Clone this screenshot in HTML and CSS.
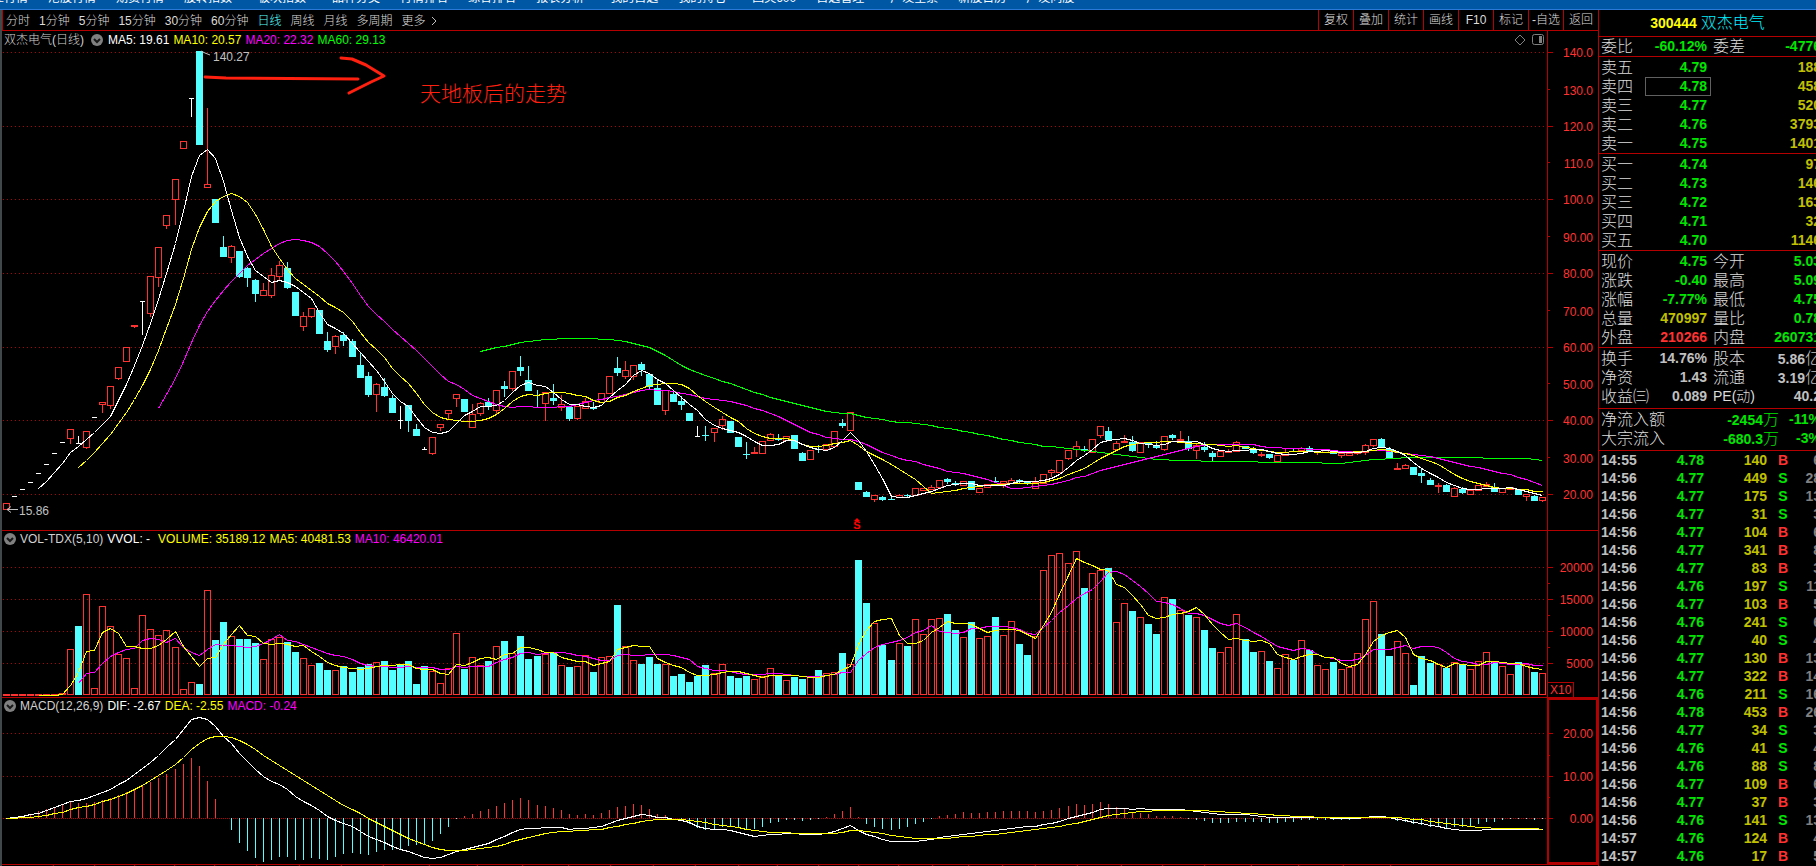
FILE: index.html
```html
<!DOCTYPE html>
<html lang="zh-CN">
<head>
<meta charset="utf-8">
<title>双杰电气 日线</title>
<link rel="stylesheet" href="styles.css">
</head>
<body>
<div class="app">
  <nav class="menu">
    <a href="#">行业行情</a><a href="#">港股行情</a><a href="#">期货行情</a><a href="#">股转指数</a>
    <a href="#" class="group">板块指数</a>
    <a href="#" class="group">品种分类</a><a href="#">行情排名</a><a href="#">综合排名</a><a href="#">报表分析</a>
    <a href="#" class="group">我的自选</a><a href="#">我的持仓</a>
    <a href="#" class="group">国英600</a><a href="#">自选管理</a>
    <a href="#" class="group">广发全景</a><a href="#">新股日历</a><a href="#">广发问股</a>
  </nav>
  <div class="body">
    <main class="chart">
      <div class="toolbar">
        <div class="periods">
          <button>分时</button><button>1分钟</button><button>5分钟</button><button>15分钟</button><button>30分钟</button><button>60分钟</button><button class="on">日线</button><button>周线</button><button>月线</button><button>多周期</button><button class="more">更多<svg width="6" height="10"><path d="M1 1l4 4-4 4"/></svg></button>
        </div>
        <div class="tools">
          <button>复权</button><button>叠加</button><button>统计</button><button>画线</button><button>F10</button><button>标记</button><button>-自选</button><button>返回</button>
        </div>
      </div>

      <section class="pane price">
        <svg class="plot" id="price"></svg>
        <header class="legend">
          <span class="dim">双杰电气(日线)</span>
          <svg class="drop" width="12" height="12"><circle cx="6" cy="6" r="6"/><path d="M3 5l3 3 3-3"/></svg>
          <span class="white">MA5: 19.61</span><span class="yellow">MA10: 20.57</span><span class="pink">MA20: 22.32</span><span class="green">MA60: 29.13</span>
          <svg class="corner" width="30" height="12"><path d="M6 1l5 5-5 5-5-5z"/><rect x="18.500" y="0.500" width="11" height="10" rx="2"/><rect class="solid" x="25" y="2" width="3" height="7"/></svg>
        </header>
      </section>

      <section class="pane volume">
        <svg class="plot" id="volume"></svg>
        <header class="legend">
          <svg class="drop" width="12" height="12"><circle cx="6" cy="6" r="6"/><path d="M3 5l3 3 3-3"/></svg>
          <span class="dim">VOL-TDX(5,10)</span><span class="white wide">VVOL: -</span><span class="yellow">VOLUME: 35189.12</span><span class="yellow">MA5: 40481.53</span><span class="pink">MA10: 46420.01</span>
        </header>
      </section>

      <section class="pane macd">
        <svg class="plot" id="macd"></svg>
        <header class="legend">
          <svg class="drop" width="12" height="12"><circle cx="6" cy="6" r="6"/><path d="M3 5l3 3 3-3"/></svg>
          <span class="dim">MACD(12,26,9)</span><span class="white">DIF: -2.67</span><span class="yellow">DEA: -2.55</span><span class="pink">MACD: -0.24</span>
        </header>
      </section>
      <svg class="dates" id="dates"></svg>
    </main>

    <aside class="panel">
      <h1 class="stock"><span>300444</span> <b>双杰电气</b></h1>
      <div class="block first">
        <table class="quote"><colgroup><col class="c1"><col class="c2"><col class="c3"><col></colgroup>
          <tr><th>委比</th><td class="g">-60.12%</td><th>委差</th><td class="g">-4776</td></tr>
        </table>
      </div>
      <div class="block">
        <table class="quote"><colgroup><col class="c1"><col class="c2"><col class="c3"><col></colgroup>
          <tr><th>卖五</th><td class="g">4.79</td><th></th><td class="y">188</td></tr>
          <tr><th>卖四</th><td class="g boxed">4.78</td><th></th><td class="y">458</td></tr>
          <tr><th>卖三</th><td class="g">4.77</td><th></th><td class="y">520</td></tr>
          <tr><th>卖二</th><td class="g">4.76</td><th></th><td class="y">3793</td></tr>
          <tr><th>卖一</th><td class="g">4.75</td><th></th><td class="y">1401</td></tr>
        </table>
      </div>
      <div class="block">
        <table class="quote"><colgroup><col class="c1"><col class="c2"><col class="c3"><col></colgroup>
          <tr><th>买一</th><td class="g">4.74</td><th></th><td class="y">97</td></tr>
          <tr><th>买二</th><td class="g">4.73</td><th></th><td class="y">146</td></tr>
          <tr><th>买三</th><td class="g">4.72</td><th></th><td class="y">163</td></tr>
          <tr><th>买四</th><td class="g">4.71</td><th></th><td class="y">32</td></tr>
          <tr><th>买五</th><td class="g">4.70</td><th></th><td class="y">1146</td></tr>
        </table>
      </div>
      <div class="block">
        <table class="quote"><colgroup><col class="c1"><col class="c2"><col class="c3"><col></colgroup>
          <tr><th>现价</th><td class="g">4.75</td><th>今开</th><td class="g">5.03</td></tr>
          <tr><th>涨跌</th><td class="g">-0.40</td><th>最高</th><td class="g">5.09</td></tr>
          <tr><th>涨幅</th><td class="g">-7.77%</td><th>最低</th><td class="g">4.75</td></tr>
          <tr><th>总量</th><td class="y">470997</td><th>量比</th><td class="g">0.78</td></tr>
          <tr><th>外盘</th><td class="r">210266</td><th>内盘</th><td class="g">260731</td></tr>
        </table>
      </div>
      <div class="block loose">
        <table class="quote"><colgroup><col class="c1"><col class="c2"><col class="c3"><col></colgroup>
          <tr><th>换手</th><td>14.76%</td><th>股本</th><td>5.86<i>亿</i></td></tr>
          <tr><th>净资</th><td>1.43</td><th>流通</th><td>3.19<i>亿</i></td></tr>
          <tr><th>收益㈢</th><td>0.089</td><th class="pe"><b>PE</b>(动)</th><td>40.2</td></tr>
        </table>
      </div>
      <div class="block loose">
        <table class="quote"><colgroup><col class="f1"><col class="f2"><col></colgroup>
          <tr><th>净流入额</th><td class="g">-2454<i>万</i></td><td class="g">-11%</td></tr>
          <tr><th>大宗流入</th><td class="g">-680.3<i>万</i></td><td class="g">-3%</td></tr>
        </table>
      </div>
      <table class="ticks"><colgroup><col class="t1"><col class="t2"><col class="t3"><col class="t4"><col></colgroup><tbody id="ticks"></tbody></table>
    </aside>
  </div>
</div>
<script src="chart.js"></script>
</body>
</html>
```

FILE: styles.css
```css
* { box-sizing: border-box; }
body {
  margin: 0;
  background: #000;
  color: #c0c0c0;
  font: 12px/18px "Liberation Sans", "Noto Sans CJK SC", sans-serif;
}
button { margin: 0; padding: 0; border: 0; background: none; color: inherit; font: inherit; }
.app { display: flex; flex-direction: column; height: 100vh; overflow: hidden; }

.menu {
  display: flex;
  flex: none;
  align-items: flex-end;
  gap: 20px;
  height: 10px;
  padding-bottom: 3px;
  overflow: hidden;
  background: #0058a4;
  border-bottom: 1px solid #2a78d8;
}
.menu a { color: #fff; text-decoration: none; white-space: nowrap; line-height: 16px; }
.menu a:first-child { margin-left: -20px; }
.menu .group { margin-left: 6px; }

.body { display: flex; flex: 1; min-height: 0; }
.chart {
  display: grid;
  flex: 1;
  grid-template: 21px minmax(0, 500fr) minmax(0, 167fr) minmax(0, 167fr) 1px / minmax(0, 1fr);
  min-width: 0;
  border-left: 2px solid #40484a;
  background: #000;
}
.toolbar {
  display: flex;
  justify-content: space-between;
  border-left: 1px solid #b40000;
  border-bottom: 1px solid #b40000;
  color: #dcdcdc;
}
.periods { display: flex; gap: 9px; padding: 1px 0 0 3px; white-space: nowrap; align-items: center; font-weight: 300; }
.periods .on { color: #54ffff; }
.more { display: flex; align-items: center; gap: 5px; }
.more svg { fill: none; stroke: #c0c0c0; }
.tools { display: flex; font-weight: 300; }
.tools button { width: 35px; border-left: 1px solid #b40000; white-space: nowrap; }

.pane {
  display: grid;
  grid-template: minmax(0, 1fr) / minmax(0, 1fr);
  border-bottom: 1px solid #b40000;
}
.plot { grid-area: 1 / 1; width: 100%; height: 100%; }
.legend {
  grid-area: 1 / 1;
  display: flex;
  align-items: center;
  align-self: start;
  gap: 4px;
  height: 18px;
  padding: 0 54px 0 2px;
  white-space: nowrap;
}
.volume .legend, .macd .legend { height: 16px; }
.drop { flex: none; }
.drop circle { fill: #808080; }
.drop path { fill: none; stroke: #181818; stroke-width: 2; }
.price .drop { margin: 0 1px 0 3px; }
.corner { margin-left: auto; fill: none; stroke: #808080; }
.corner .solid { fill: #808080; stroke: none; }
.dim { color: #d0d0d0; font-weight: 300; }
.white { color: #fff; }
.wide { margin-right: 4px; }
.yellow { color: #ff0; }
.pink { color: #f0f; }
.green { color: #0f0; }
.dates { width: 100%; height: 1px; }

.plot text { fill: #ff3232; }
.plot .note { fill: #c0c0c0; }
.plot .remark { fill: #ff2010; font-size: 21px; font-weight: 300; }
.plot .mark { fill: #f00; font-size: 11px; font-weight: bold; }
.crisp { shape-rendering: crispEdges; fill: none; }
.grid, .axis { stroke: #b40000; }
.grid { stroke-dasharray: 1 3; }
.zero { stroke: #b40000; stroke-dasharray: 1 1; }
.up { stroke: #ff3232; }
.down { stroke: #54ffff; }
.fill { fill: #54ffff; }
.flat { stroke: #fff; }
.l-white { stroke: #fff; }
.l-yellow { stroke: #ff0; }
.l-pink { stroke: #f0f; }
.l-green { stroke: #0f0; }
.frame { stroke: #b40000; stroke-width: 2; }
.pen { fill: none; stroke: #ff2010; stroke-width: 3; stroke-linecap: round; stroke-linejoin: round; }
.lead { fill: none; stroke: #c0c0c0; }

.panel { flex: 0 0 218px; overflow: hidden; border-left: 1px solid #b40000; }
.stock {
  display: flex;
  align-items: center;
  justify-content: center;
  gap: 4px;
  height: 27px;
  margin: 0;
  border-bottom: 1px solid #b40000;
  color: #ff0;
  font-size: 14px;
}
.stock b { color: #00f0ff; font-size: 16px; font-weight: 300; }
.block { padding: 1px 0 0 2px; border-bottom: 1px solid #b40000; }
.block.first { padding-top: 0; }
.block.loose { padding-bottom: 2px; }
table { border-collapse: collapse; table-layout: fixed; width: 220px; white-space: nowrap; }
th, td { padding: 0; height: 19px; line-height: 17px; }
th { color: #dcdcdc; font-size: 16px; font-weight: 300; text-align: left; }
td { font-size: 14px; font-weight: bold; text-align: right; }
.quote td:nth-child(2) { padding-right: 4px; }
.quote th:nth-child(3) { padding-left: 2px; }
td i { font-size: 16px; font-style: normal; font-weight: 300; }
.quote .pe { font-size: 14px; }
.quote .boxed { outline: 1px solid #606060; outline-offset: -1px; }
.c1 { width: 44px; }
.c2 { width: 66px; }
.c3 { width: 44px; }
.f1 { width: 74px; }
.f2 { width: 108px; }
.ticks { margin-left: 2px; }
.ticks td { height: 18px; line-height: 18px; }
.ticks td:first-child { text-align: left; }
.ticks td:nth-child(4) { text-align: center; }
.ticks td:last-child { color: #808080; }
.t1 { width: 44px; }
.t2 { width: 59px; }
.t3 { width: 63px; }
.t4 { width: 32px; }
.g { color: #00e600; }
.y { color: #c0c000; }
.r { color: #ff3232; }
```

FILE: chart.js
```js
// Candles: kind (u up, d down, w flat), body top, body bottom, [high, low].
// Levels run downwards, three to a pixel, counted from each batch's base.
const batches = [
  [780, `u 730 748|w 709 709|w 688 688|w 667 667|w 640 640|w 613 613|w 580 580|w 547 547|u 508 536 508 552|w 550 550 530 550
u 514 563 514 567|w 472 472|u 427 434 427 459|u 379 437 379 447|u 322 356 322 360|u 262 305|u 196 200 196 204|w 124 124 124 225|u 49 161 49 171|u -38 53 -38 81
u -134 -103 -134 -93|u -242 -181 -242 -105|u -356 -334|w -485 -485 -485 -430|d -627 -346|u -228 -217 -456 -217|d -182 -112|d -39 -10 -72 -10|u -41 -7 -45 9|d -27 50 -27 54
d 24 53 22 81|d 60 101 57 126|u 91 107 69 107|u 46 107 24 113|u 16 49 3 59|d 24 83 6 87|d 97 167|u 169 200 156 213|u 145 170 145 174|d 150 221
d 243 269 216 276|u 229 260 225 282|d 225 242 216 258|d 243 290 237 290|d 315 353 279 353|d 348 404 336 411|u 373 404 369 456|d 381 407 354 411|d 414 458 405 458|w 481 481 438 507
d 435 482 435 516|d 507 527 492 527|w 569 569 561 569|u 532 581 532 585|u 493 503 493 513|u 451 461 451 479|u 403 416 403 441|d 417 455|u 463 503 432 503|u 430 461 426 467
d 426 440 414 450|u 391 452 391 462|d 378 387 363 411|u 334 386 334 392|d 321 332 288 348|d 360 392 318 392|d 441 444 390 444|u 397 431 397 483|d 414 423 372 435`],
  [960, `u 253 263 226 273|d 260 297 260 302|u 258 296 258 300|u 244 265 234 265|d 262 266 246 270|u 220 248|u 169 220|d 144 159 111 168|u 151 170 123 177|u 136 170 136 179|d 132 149 126 168
d 162 200 162 207|d 204 254 177 254|u 211 272 211 285|d 222 245 216 245|d 243 254 228 270|d 279 302|w 349 349 318 349|d 345 348 318 363|u 325 338 325 366|u 298 317 289 330
d 303 338|d 351 380|d 402 405 366 417|u 397 401 381 401|u 364 401|u 343 362 339 362|d 354 360 342 363|u 349 362|d 345 386|d 399 423 396 423
u 391 418|d 387 390 375 399|u 373 388|u 334 380|d 309 318 297 324|u 277 331|d 486 510|d 516 530 513 530|u 526 539 526 545|d 531 540 528 543
d 536 539 528 539|u 526 531 522 531|d 525 528 522 531|u 505 527|u 505 512|u 502 509 495 509|u 481 503|d 477 486 474 491|d 489 494 483 498|u 484 497
d 483 510|u 505 518|u 492 503|d 483 486 471 486`],
  [1200, `u 244 251 244 262|u 241 251 235 251|d 240 245 237 251|d 245 250 245 254|u 248 265 231 265|u 223 250|u 211 218 207 231|u 181 218|u 150 176 150 180|u 139 149 123 171
d 147 152 138 156|u 118 158|u 79 107 79 113|d 93 120 81 120|u 130 149 123 149|u 123 128 105 128|d 126 153 108 156|u 127 157|d 128 133 128 144|d 136 143 123 147
u 109 149 109 153|d 105 114 102 120|u 117 120 93 120|d 123 147 108 153|u 136 152 130 177|d 140 150 126 156|d 159 171 153 183|u 155 170|u 153 158 147 158|u 127 155 123 155
d 138 147|d 150 158 141 162|u 162 164 158 171|d 162 174 162 177|u 166 184|u 156 167 147 167|d 153 156 147 156|u 145 152 141 152|d 144 156 138 156|u 154 158 154 165
u 152 157|d 150 161|u 160 167 160 174|u 160 167|u 158 161 153 165|u 136 157 132 165|u 118 136 118 141|d 117 141 114 141|d 147 174 141 174|u 205 209 189 209
u 196 206 192 206|d 201 225|d 219 228 207 249|d 240 255 234 255|u 255 260 249 279|d 255 276 252 276|u 265 290 262 290|d 267 279 261 282|u 271 284|u 256 271
u 252 258 246 258|d 261 276 249 276|u 265 278|u 262 267|d 270 285|u 284 288 284 303|d 288 302 285 302|u 292 302 292 306`]
];
const candles = batches.flatMap(([base, text]) => text.split(/[|\n]/).map(row => {
  const p = row.split(' ');
  const n = p.slice(1).map(v => +v + base);
  return { kind: p[0], top: n[0], bot: n[1], high: n[2] ?? n[0], low: n[3] ?? n[1], close: p[0] === 'd' ? n[1] : n[0] };
}));

// Bar heights, three to a pixel.
const vols = [1,1,1,1,1,1,1,5,137,206,304,22,268,208,124,112,22,241,199,181,196,145,19,40,33,316,164,218,178,167,167,155,109,169,175,158,128,112,91,95,74,76,86,68,83,92,100,101,74,90,101,32,86,73,37,82,187,77,115,91,101,148,161,127,176,107,116,124,125,
91,83,88,121,68,115,118,269,148,106,92,113,92,94,56,62,38,56,89,67,94,56,50,56,49,58,82,61,46,53,47,55,74,67,70,125,94,404,275,217,149,104,157,146,229,184,229,232,242,194,175,218,172,178,233,
181,223,152,119,178,376,421,427,397,433,320,367,376,380,220,277,251,235,212,182,295,287,256,239,235,194,140,130,145,244,167,128,133,101,82,124,104,166,134,91,79,98,79,85,127,229,283,182,116,163,127,29,116,95,94,80,100,92,79,103,130,98,88,64,98,92,68,67];

const average = (list, n) => list.map((_, i) => i < n - 1 ? null : list.slice(i - n + 1, i + 1).reduce((a, b) => a + b) / n);
const ema = (list, n) => { let e = list[0]; return list.map(v => (e = e + (v - e) * 2 / (n + 1))); };

const closes = candles.map(c => c.close);
const yuan = closes.map(c => 20 + (1483 - c) / 11.05);
const slow = ema(yuan, 26);
const dif = ema(yuan, 12).map((v, i) => v - slow[i]);
const dea = ema(dif, 9);

const AXIS = 51;
const pane = (id, height) => {
  const el = document.getElementById(id);
  const w = el.clientWidth, h = el.clientHeight;
  const plot = w - AXIS;
  const sx = plot / 1545, sy = h / height;
  const p = { el, w, h, plot, out: [] };
  p.x = n => Math.floor((4.07 + 8.045 * n) * sx);
  p.y = v => v * sy;
  p.half = Math.max(1, Math.floor(3 * sx));
  p.add = s => p.out.push(s);
  p.path = (cls, d) => p.add(`<path class="crisp ${cls}" d="${d}"/>`);
  p.text = (x, y, s, cls = '', anchor = 'start') => p.add(`<text x="${x}" y="${y}" class="${cls}" text-anchor="${anchor}">${s}</text>`);
  p.row = v => Math.floor(p.y(v)) + 0.5;
  p.level = (v, label, cls = 'grid') => {
    p.path(cls, `M1 ${p.row(v)}H${plot}`);
    p.path('axis', `M${plot} ${p.row(v)}h6`);
    p.text(w - 5, p.row(v) + 4, label, '', 'end');
  };
  p.minor = (v, label) => {
    p.path('axis', `M${plot} ${p.row(v)}h3`);
    if (label) p.text(w - 5, p.row(v) + 5, label, '', 'end');
  };
  p.line = (cls, list, at) => p.path(cls, list.map((v, i) => v === null ? '' : `${p.x(i) + 0.5} ${(Math.floor(at(v)) + 0.5)}`)
    .filter(Boolean).map((s, i) => (i ? 'L' : 'M') + s).join(''));
  p.done = () => {
    p.path('axis', `M${plot + 0.5} 0V${h}`);
    el.innerHTML = p.out.join('');
  };
  return p;
};

function drawPrice() {
  const p = pane('price', 499);
  const at = v => p.y(v / 3 - 31);
  for (let v = 140; v >= 20; v -= 10) {
    const y = (1483 - (v - 20) * 11.05) / 3 - 31;
    const label = v >= 100 ? v.toFixed(1) : v.toFixed(2);
    v % 20 ? p.minor(y, label) : p.level(y, label);
  }
  candles.forEach((c, i) => {
    const x = p.x(i), a = p.half;
    const t = Math.floor(at(c.top)), b = Math.floor(at(c.bot)), hi = Math.floor(at(c.high)), lo = Math.ceil(at(c.low));
    if (c.kind === 'w') {
      p.path('flat', `M${x - a + 1} ${t + 0.5}h${2 * a - 1}` + (c.high !== c.low ? `M${x + 0.5} ${hi}V${lo}` : ''));
    } else if (c.kind === 'u') {
      p.path('up', `M${x - a + 0.5} ${t + 0.5}h${2 * a}V${Math.max(b, t + 1) + 0.5}h${-2 * a}zM${x + 0.5} ${hi}V${t}M${x + 0.5} ${b}V${lo}`);
    } else {
      const top = Math.round(at(c.top)), bot = Math.max(top + 1, Math.round(at(c.bot)));
      p.add(`<rect class="crisp fill" x="${x - a}" y="${top}" width="${2 * a + 1}" height="${bot - top}"/>`);
      p.path('down', `M${x + 0.5} ${hi}V${lo}`);
    }
  });
  p.line('l-green', average(closes, 60), at);
  p.line('l-pink', average(closes, 20), at);
  p.line('l-yellow', average(closes, 10), at);
  p.line('l-white', average(closes, 5), at);

  const peak = p.x(24), top = at(153);
  p.add(`<path class="lead" d="M${peak + 2} ${top}l4 2 5 2"/>`);
  p.text(peak + 14, top + 10, '140.27', 'note');
  const base = Math.round(at(1528)) + 0.5;
  p.add(`<path class="lead" d="M5 ${base}h11M9 ${base - 3}l-4 3 4 3"/>`);
  p.text(17, base + 5, '15.86', 'note');
  p.add(`<path class="pen" d="M${peak + 6} ${top + 26}l21 1 132 1M${peak + 142} ${top + 7}l11 1 14 6 18 11-13 6-10 5-12 6"/>`);
  p.text(peak + 221, top + 50, '天地板后的走势', 'remark');
  const gap = p.x(106) - 1;
  p.add(`<path class="mark" d="M${gap - 3} ${p.y(490)}l3-3 3 3z"/>`);
  p.text(gap, p.y(498), 'S', 'mark', 'middle');
  p.done();
}

function drawVolume() {
  const p = pane('volume', 166);
  p.level(36, '20000'); p.level(68, '15000'); p.level(100, '10000'); p.level(132, '5000');
  [52, 84, 116].forEach(v => p.minor(v));
  const at = v => p.y(164.4 - v / 3);
  vols.forEach((v, i) => {
    const x = p.x(i), a = p.half, t = Math.floor(at(v)), b = Math.floor(at(0));
    const falling = candles[i].kind === 'd' || [9, 49, 52, 86].includes(i);
    if (falling) p.add(`<rect class="crisp fill" x="${x - a}" y="${t}" width="${2 * a + 1}" height="${b - t}"/>`);
    else p.path('up', `M${x - a + 0.5} ${t + 0.5}h${2 * a}V${b - 0.5}h${-2 * a}z`);
  });
  p.line('l-pink', average(vols, 10), at);
  p.line('l-yellow', average(vols, 5), at);
  p.path('axis', `M${p.plot} ${p.h - 14.5}h26V${p.h}`);
  p.text(p.plot + 3, p.h - 3, 'X10');
  p.done();
}

function drawMacd() {
  const p = pane('macd', 166);
  const at = v => p.y(120.3 - v * 4.25);
  p.level(35.3, '20.00'); p.level(78.3, '10.00'); p.level(120.3, '0.00', 'zero');
  [57, 99].forEach(v => p.minor(v));
  dif.forEach((v, i) => {
    const bar = 2 * (v - dea[i]), x = p.x(i) + 0.5;
    if (Math.abs(bar) > 0.1) p.path(bar > 0 ? 'up' : 'down', `M${x} ${Math.floor(at(0))}V${Math.round(at(bar))}`);
  });
  p.line('l-white', dif, at);
  p.line('l-yellow', dea, at);
  p.path('frame', `M${p.plot + 1} 0V${p.h - 1}H${p.w - 1}V1H${p.plot}`);
  p.done();
}

function drawDates() {
  const el = document.getElementById('dates');
  const sx = (el.clientWidth - AXIS) / 1545;
  const months = [51,92,132,172,212,254,297,339,381,427,475,520,566,608,651,693,736,775,816,856,896,930,966,1000,1033,1075,1119,1160,1202,1249,1296,1341,1388];
  el.innerHTML = `<path class="crisp axis" d="${months.map(m => `M${Math.round(m * sx) + 0.5} 0v1`).join('')}"/>`;
}

const trades = `14:55 4.78 140 B 6|14:56 4.77 449 S 28|14:56 4.77 175 S 13|14:56 4.77 31 S 3|14:56 4.77 104 B 6|14:56 4.77 341 B 8
14:56 4.77 83 B 3|14:56 4.76 197 S 11|14:56 4.77 103 B 5|14:56 4.76 241 S 6|14:56 4.77 40 S 4|14:56 4.77 130 B 13
14:56 4.77 322 B 14|14:56 4.76 211 S 16|14:56 4.78 453 B 26|14:56 4.77 34 S 3|14:56 4.76 41 S 4|14:56 4.76 88 S 8
14:56 4.77 109 B 6|14:56 4.77 37 B 3|14:56 4.76 141 S 13|14:57 4.76 124 B 4|14:57 4.76 17 B 5`;
document.getElementById('ticks').innerHTML = trades.split(/[|\n]/).map(row => {
  const [time, price, volume, side, count] = row.split(' ');
  return `<tr><td>${time}</td><td class="g">${price}</td><td class="y">${volume}</td><td class="${side === 'B' ? 'r' : 'g'}">${side}</td><td>${count}</td></tr>`;
}).join('');

const draw = () => { drawPrice(); drawVolume(); drawMacd(); drawDates(); };
draw();
addEventListener('resize', draw);
```
